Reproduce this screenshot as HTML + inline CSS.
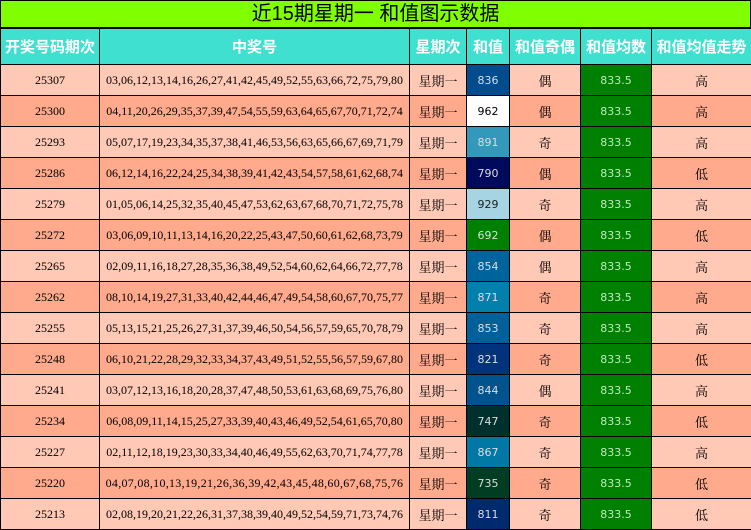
<!DOCTYPE html>
<html><head><meta charset="utf-8"><style>
*{margin:0;padding:0;box-sizing:border-box}
body{width:751px;height:530px;background:#fff;overflow:hidden;font-family:"Liberation Serif","Noto Serif CJK SC",serif}
.t{position:absolute;left:0;top:0;width:751px;height:29px;background:#80ff00;border:1px solid #000;border-bottom:2px solid #000;text-align:center;font:20px/26px "Liberation Sans","Noto Sans CJK SC",sans-serif;color:#000}
table{position:absolute;left:0;top:28px;width:751px;border-collapse:collapse;table-layout:fixed}
td,th{border:1px solid #000;text-align:center;font-size:12px;color:#000;padding:0;white-space:nowrap;overflow:hidden}
th{background:#40e0d0;color:#fff;height:36px;font:bold 15px "Liberation Sans","Noto Sans CJK SC",sans-serif}
td{height:31px}
tr.a td{background:#ffc9b6}
tr.b td{background:#ffaa8c}
td.z{font-size:13px}
td.s{font:11px "DejaVu Sans",sans-serif;color:#ddd}
td.g{background:#008000!important;font:11px "DejaVu Sans",sans-serif;color:#bfe8bf}
</style></head><body>
<div class="t">近15期星期一 和值图示数据</div>
<table>
<colgroup><col style="width:99px"><col style="width:310px"><col style="width:57px"><col style="width:43px"><col style="width:71px"><col style="width:71px"><col style="width:100px"></colgroup>
<tr><th>开奖号码期次</th><th>中奖号</th><th>星期次</th><th>和值</th><th>和值奇偶</th><th>和值均数</th><th>和值均值走势</th></tr>
<tr class="a"><td>25307</td><td>03,06,12,13,14,16,26,27,41,42,45,49,52,55,63,66,72,75,79,80</td><td class="z">星期一</td><td class="s" style="background:#004c8c">836</td><td class="z">偶</td><td class="g">833.5</td><td class="z">高</td></tr>
<tr class="b"><td>25300</td><td>04,11,20,26,29,35,37,39,47,54,55,59,63,64,65,67,70,71,72,74</td><td class="z">星期一</td><td class="s" style="background:#fff;color:#000">962</td><td class="z">偶</td><td class="g">833.5</td><td class="z">高</td></tr>
<tr class="a"><td>25293</td><td>05,07,17,19,23,34,35,37,38,41,46,53,56,63,65,66,67,69,71,79</td><td class="z">星期一</td><td class="s" style="background:#3399bb">891</td><td class="z">奇</td><td class="g">833.5</td><td class="z">高</td></tr>
<tr class="b"><td>25286</td><td>06,12,14,16,22,24,25,34,38,39,41,42,43,54,57,58,61,62,68,74</td><td class="z">星期一</td><td class="s" style="background:#000a5c">790</td><td class="z">偶</td><td class="g">833.5</td><td class="z">低</td></tr>
<tr class="a"><td>25279</td><td>01,05,06,14,25,32,35,40,45,47,53,62,63,67,68,70,71,72,75,78</td><td class="z">星期一</td><td class="s" style="background:#a6d4e2;color:#222">929</td><td class="z">奇</td><td class="g">833.5</td><td class="z">高</td></tr>
<tr class="b"><td>25272</td><td>03,06,09,10,11,13,14,16,20,22,25,43,47,50,60,61,62,68,73,79</td><td class="z">星期一</td><td class="s" style="background:#008000">692</td><td class="z">偶</td><td class="g">833.5</td><td class="z">低</td></tr>
<tr class="a"><td>25265</td><td>02,09,11,16,18,27,28,35,36,38,49,52,54,60,62,64,66,72,77,78</td><td class="z">星期一</td><td class="s" style="background:#00649c">854</td><td class="z">偶</td><td class="g">833.5</td><td class="z">高</td></tr>
<tr class="b"><td>25262</td><td>08,10,14,19,27,31,33,40,42,44,46,47,49,54,58,60,67,70,75,77</td><td class="z">星期一</td><td class="s" style="background:#0080aa">871</td><td class="z">奇</td><td class="g">833.5</td><td class="z">高</td></tr>
<tr class="a"><td>25255</td><td>05,13,15,21,25,26,27,31,37,39,46,50,54,56,57,59,65,70,78,79</td><td class="z">星期一</td><td class="s" style="background:#00609a">853</td><td class="z">奇</td><td class="g">833.5</td><td class="z">高</td></tr>
<tr class="b"><td>25248</td><td>06,10,21,22,28,29,32,33,34,37,43,49,51,52,55,56,57,59,67,80</td><td class="z">星期一</td><td class="s" style="background:#00337c">821</td><td class="z">奇</td><td class="g">833.5</td><td class="z">低</td></tr>
<tr class="a"><td>25241</td><td>03,07,12,13,16,18,20,28,37,47,48,50,53,61,63,68,69,75,76,80</td><td class="z">星期一</td><td class="s" style="background:#00538c">844</td><td class="z">偶</td><td class="g">833.5</td><td class="z">高</td></tr>
<tr class="b"><td>25234</td><td>06,08,09,11,14,15,25,27,33,39,40,43,46,49,52,54,61,65,70,80</td><td class="z">星期一</td><td class="s" style="background:#00302e">747</td><td class="z">奇</td><td class="g">833.5</td><td class="z">低</td></tr>
<tr class="a"><td>25227</td><td>02,11,12,18,19,23,30,33,34,40,46,49,55,62,63,70,71,74,77,78</td><td class="z">星期一</td><td class="s" style="background:#0078a6">867</td><td class="z">奇</td><td class="g">833.5</td><td class="z">高</td></tr>
<tr class="b"><td>25220</td><td style="letter-spacing:0.28px">04,07,08,10,13,19,21,26,36,39,42,43,45,48,60,67,68,75,76</td><td class="z">星期一</td><td class="s" style="background:#003d22">735</td><td class="z">奇</td><td class="g">833.5</td><td class="z">低</td></tr>
<tr class="a"><td>25213</td><td>02,08,19,20,21,22,26,31,37,38,39,40,49,52,54,59,71,73,74,76</td><td class="z">星期一</td><td class="s" style="background:#002a6e">811</td><td class="z">奇</td><td class="g">833.5</td><td class="z">低</td></tr>
</table>
</body></html>
